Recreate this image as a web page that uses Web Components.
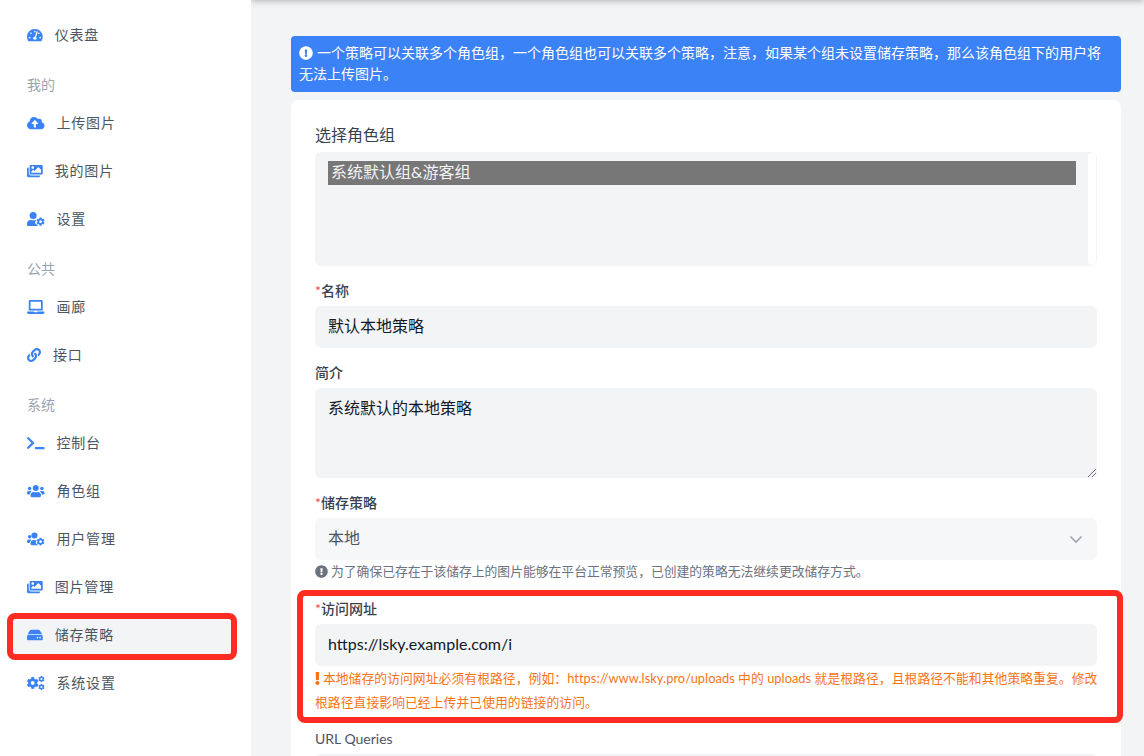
<!DOCTYPE html>
<html lang="zh-CN">
<head>
<meta charset="utf-8">
<title>储存策略</title>
<style>
html,body{margin:0;padding:0;height:756px;overflow:hidden;background:#f3f4f6}
body{font-family:Lato,"Noto Sans CJK SC",sans-serif;color:#374151}
</style>
</head>
<body>
<x-app>
  <x-sidebar slot="side">
    <x-nav icon="tach" w="576" label="仪表盘"></x-nav>
    <x-group>我的</x-group>
    <x-nav icon="cloud" w="640" label="上传图片"></x-nav>
    <x-nav icon="images" w="576" label="我的图片"></x-nav>
    <x-nav icon="usercog" w="640" label="设置"></x-nav>
    <x-group>公共</x-group>
    <x-nav icon="laptop" w="640" label="画廊"></x-nav>
    <x-nav icon="link" w="512" label="接口"></x-nav>
    <x-group>系统</x-group>
    <x-nav icon="terminal" w="640" label="控制台"></x-nav>
    <x-nav icon="users" w="640" label="角色组"></x-nav>
    <x-nav icon="userscog" w="640" label="用户管理"></x-nav>
    <x-nav icon="images" w="576" label="图片管理"></x-nav>
    <x-nav icon="hdd" w="576" label="储存策略" active></x-nav>
    <x-nav icon="cogs" w="640" label="系统设置"></x-nav>
  </x-sidebar>
  <x-alert>一个策略可以关联多个角色组，一个角色组也可以关联多个策略，注意，如果某个组未设置储存策略，那么该角色组下的用户将无法上传图片。</x-alert>
  <x-card>
    <x-field label="选择角色组" big>
      <x-multi>系统默认组&amp;游客组</x-multi>
    </x-field>
    <x-field label="名称" required>
      <x-input>默认本地策略</x-input>
    </x-field>
    <x-field label="简介">
      <x-input area>系统默认的本地策略</x-input>
    </x-field>
    <x-field label="储存策略" required>
      <x-input select>本地</x-input>
      <x-help slot="help" icon="circle">为了确保已存在于该储存上的图片能够在平台正常预览，已创建的策略无法继续更改储存方式。</x-help>
    </x-field>
    <x-field label="访问网址" required marked>
      <x-input>https://lsky.example.com/i</x-input>
      <x-help slot="help" icon="bang" warn>本地储存的访问网址必须有根路径，例如：https://www.lsky.pro/uploads 中的 uploads 就是根路径，且根路径不能和其他策略重复。修改根路径直接影响已经上传并已使用的链接的访问。</x-help>
    </x-field>
    <x-field label="URL Queries" plain>
      <x-input></x-input>
    </x-field>
  </x-card>
</x-app>
<script>
const GEAR='M610.5 373.3c2.6-14.1 2.6-28.5 0-42.6l25.8-14.9c3-1.7 4.3-5.2 3.3-8.5-6.7-21.6-18.2-41.2-33.2-57.4-2.3-2.5-6-3.1-9-1.4l-25.8 14.9c-10.9-9.3-23.4-16.5-36.9-21.3v-29.8c0-3.4-2.4-6.4-5.7-7.1-22.3-5-45-4.8-66.2 0-3.3.7-5.7 3.7-5.7 7.1v29.8c-13.5 4.8-26 12-36.9 21.3l-25.8-14.9c-2.9-1.7-6.7-1.1-9 1.4-15 16.2-26.5 35.8-33.2 57.4-1 3.3.4 6.8 3.3 8.5l25.8 14.9c-2.6 14.1-2.6 28.5 0 42.6l-25.8 14.9c-3 1.7-4.3 5.2-3.3 8.5 6.7 21.6 18.2 41.1 33.2 57.4 2.3 2.5 6 3.1 9 1.4l25.8-14.9c10.9 9.3 23.4 16.5 36.9 21.3v29.8c0 3.4 2.4 6.4 5.7 7.1 22.3 5 45 4.8 66.2 0 3.3-.7 5.7-3.7 5.7-7.1v-29.8c13.5-4.8 26-12 36.9-21.3l25.8 14.9c2.9 1.7 6.7 1.1 9-1.4 15-16.2 26.5-35.8 33.2-57.4 1-3.3-.4-6.8-3.3-8.5l-25.8-14.9zM496 400.5c-26.8 0-48.5-21.8-48.5-48.5s21.8-48.5 48.5-48.5 48.5 21.8 48.5 48.5-21.7 48.5-48.5 48.5z';
const gearAt=(cx,cy,s)=>`<path transform="translate(${cx} ${cy}) scale(${s}) translate(-496 -352)" d="${GEAR}"/>`;
const ICONS={
tach:'<path d="M288 32C128.94 32 0 160.94 0 320c0 52.8 14.25 102.26 39.06 144.8 5.61 9.62 16.3 15.2 27.44 15.2h443c11.14 0 21.83-5.58 27.44-15.2C561.75 422.26 576 372.8 576 320c0-159.06-128.94-288-288-288zm0 64c14.71 0 26.58 10.13 30.32 23.65-1.11 2.26-2.64 4.23-3.45 6.67l-9.22 27.67c-5.13 3.49-10.97 6.01-17.64 6.01-17.67 0-32-14.33-32-32S270.33 96 288 96zM96 384c-17.67 0-32-14.33-32-32s14.33-32 32-32 32 14.33 32 32-14.33 32-32 32zm48-160c-17.67 0-32-14.33-32-32s14.33-32 32-32 32 14.33 32 32-14.33 32-32 32zm246.77-72.41l-61.33 184C343.13 347.33 352 364.54 352 384c0 11.72-3.38 22.55-8.88 32H232.88c-5.5-9.45-8.88-20.28-8.88-32 0-33.94 26.5-61.43 59.9-63.59l61.34-184.01c4.17-12.56 17.73-19.45 30.36-15.17 12.57 4.19 19.35 17.79 15.17 30.36zm14.66 57.2l15.52-46.55c3.47-1.29 7.13-2.23 11.05-2.23 17.67 0 32 14.33 32 32s-14.33 32-32 32c-11.38-.01-20.89-6.27-26.57-15.22zM480 384c-17.67 0-32-14.33-32-32s14.33-32 32-32 32 14.33 32 32-14.33 32-32 32z"/>',
cloud:'<path d="M537.6 226.6c4.1-10.7 6.4-22.4 6.4-34.6 0-53-43-96-96-96-19.7 0-38.1 6-53.3 16.2C367 64.2 315.3 32 256 32c-88.4 0-160 71.6-160 160 0 2.7.1 5.4.2 8.1C40.2 219.8 0 273.2 0 336c0 79.5 64.5 144 144 144h368c70.7 0 128-57.3 128-128 0-61.9-44-113.6-102.4-125.4zM393.4 288H328v112c0 8.8-7.2 16-16 16h-48c-8.8 0-16-7.2-16-16V288h-65.4c-14.3 0-21.4-17.2-11.3-27.3l105.4-105.4c6.2-6.2 16.4-6.2 22.6 0l105.4 105.4c10.1 10.1 2.9 27.3-11.3 27.3z"/>',
images:'<path d="M480 416v16c0 26.51-21.49 48-48 48H48c-26.51 0-48-21.49-48-48V176c0-26.51 21.49-48 48-48h16v208c0 44.112 35.888 80 80 80h336zm96-80V80c0-26.51-21.49-48-48-48H144c-26.51 0-48 21.49-48 48v256c0 26.51 21.49 48 48 48h384c26.51 0 48-21.49 48-48zM256 128c0 26.51-21.49 48-48 48s-48-21.49-48-48 21.49-48 48-48 48 21.49 48 48zm-96 144l55.515-55.515c4.686-4.686 12.284-4.686 16.971 0L272 256l135.515-135.515c4.686-4.686 12.284-4.686 16.971 0L512 208v112H160v-48z"/>',
usercog:'<path d="'+GEAR+'"/><circle cx="224" cy="128" r="128"/><path d="M48 512C21.5 512 0 490.5 0 464v-41.6C0 348.2 60.2 288 134.4 288h16.7c22.2 10.2 46.9 16 72.9 16 26 0 50.7-5.8 72.9-16h28c-6 8-11 22-11 34l12 7-14 9c-15 10-22 30-16 48 8 24 20 45 37 63 13 14 33 17 49 8l-2 24c0 8 1 20 6 32z"/>',
laptop:'<path d="M624 416H381.54c-.74 19.81-14.71 32-32.74 32H288c-18.69 0-33.02-17.47-32.77-32H16c-8.8 0-16 7.2-16 16v16c0 35.2 28.8 64 64 64h512c35.2 0 64-28.8 64-64v-16c0-8.8-7.2-16-16-16zM576 48c0-26.4-21.6-48-48-48H112C85.6 0 64 21.6 64 48v336h512V48zm-64 272H128V64h384v256z"/>',
link:'<path d="M326.612 185.391c59.747 59.809 58.927 155.698.36 214.59-.11.12-.24.25-.36.37l-67.2 67.2c-59.27 59.27-155.699 59.262-214.96 0-59.27-59.26-59.27-155.7 0-214.96l37.106-37.106c9.84-9.84 26.786-3.3 27.294 10.606.648 17.722 3.826 35.527 9.69 52.721 1.986 5.822.567 12.262-3.783 16.612l-13.087 13.087c-28.026 28.026-28.905 73.66-1.155 101.96 28.024 28.579 74.086 28.749 102.325.51l67.2-67.19c28.191-28.191 28.073-73.757 0-101.83-3.701-3.694-7.429-6.564-10.341-8.569a16.037 16.037 0 0 1-6.947-12.606c-.396-10.567 3.348-21.456 11.698-29.806l21.054-21.055c5.521-5.521 14.182-6.199 20.584-1.731a152.482 152.482 0 0 1 20.522 17.197zM467.547 44.449c-59.261-59.262-155.69-59.27-214.96 0l-67.2 67.2c-.12.12-.25.25-.36.37-58.566 58.892-59.387 154.781.36 214.59a152.454 152.454 0 0 0 20.521 17.196c6.402 4.468 15.064 3.789 20.584-1.731l21.054-21.055c8.35-8.35 12.094-19.239 11.698-29.806a16.037 16.037 0 0 0-6.947-12.606c-2.912-2.005-6.64-4.875-10.341-8.569-28.073-28.073-28.191-73.639 0-101.83l67.2-67.19c28.239-28.239 74.3-28.069 102.325.51 27.75 28.3 26.872 73.934-1.155 101.96l-13.087 13.087c-4.35 4.35-5.769 10.79-3.783 16.612 5.864 17.194 9.042 34.999 9.69 52.721.509 13.906 17.454 20.446 27.294 10.606l37.106-37.106c59.271-59.259 59.271-155.699.001-214.959z"/>',
terminal:'<path d="M257.981 272.971L63.638 467.314c-9.373 9.373-24.569 9.373-33.941 0L7.029 444.647c-9.357-9.357-9.375-24.522-.04-33.901L161.011 256 6.99 101.255c-9.335-9.379-9.317-24.544.04-33.901l22.667-22.667c9.373-9.373 24.569-9.373 33.941 0L257.981 239.03c9.373 9.372 9.373 24.568 0 33.941zM640 456v-32c0-13.255-10.745-24-24-24H312c-13.255 0-24 10.745-24 24v32c0 13.255 10.745 24 24 24h304c13.255 0 24-10.745 24-24z"/>',
users:'<path d="M96 224c35.3 0 64-28.7 64-64s-28.7-64-64-64-64 28.7-64 64 28.7 64 64 64zm448 0c35.3 0 64-28.7 64-64s-28.7-64-64-64-64 28.7-64 64 28.7 64 64 64zm32 32h-64c-17.6 0-33.5 7.1-45.1 18.6 40.3 22.1 68.9 62 75.1 109.4h66c17.7 0 32-14.3 32-32v-32c0-35.3-28.7-64-64-64zm-256 0c61.9 0 112-50.1 112-112S381.9 32 320 32 208 82.1 208 144s50.1 112 112 112zm76.8 32h-8.3c-20.8 10-43.9 16-68.5 16s-47.6-6-68.5-16h-8.3C179.6 288 128 339.6 128 403.2V432c0 26.5 21.5 48 48 48h288c26.5 0 48-21.5 48-48v-28.8c0-63.6-51.6-115.2-115.2-115.2zm-223.7-13.4C161.5 263.1 145.6 256 128 256H64c-35.3 0-64 28.7-64 64v32c0 17.7 14.3 32 32 32h65.9c6.3-47.4 34.9-87.3 75.2-109.4z"/>',
userscog:'<circle cx="96" cy="176" r="64"/><circle cx="272" cy="128" r="112"/><path d="M0 336c0-35 29-64 64-64h64c18 0 34 7 45 19-40 22-68 62-75 109H32c-18 0-32-14-32-32z"/><path d="M176 480c-26 0-48-22-48-48v-29c0-64 52-115 115-115h8c21 10 44 16 69 16 12 0 20-1 30-3-5 12-7 26-3 40l-14 10c-12 9-16 25-10 40 7 19 17 37 31 52 10 11 27 13 40 6v31z"/>'+gearAt(496,352,.95),
hdd:'<path d="M576 304v96c0 26.51-21.49 48-48 48H48c-26.51 0-48-21.49-48-48v-96c0-26.51 21.49-48 48-48h480c26.51 0 48 21.49 48 48zm-48-80a79.557 79.557 0 0 1 30.777 6.165L462.25 85.374A48.003 48.003 0 0 0 422.311 64H153.689a48 48 0 0 0-39.938 21.374L17.223 230.165A79.557 79.557 0 0 1 48 224h480zm-48 96c-17.673 0-32 14.327-32 32s14.327 32 32 32 32-14.327 32-32-14.327-32-32-32zm-96 0c-17.673 0-32 14.327-32 32s14.327 32 32 32 32-14.327 32-32-14.327-32-32-32z"/>',
cogs:gearAt(208,256,1.45)+gearAt(528,112,.75)+gearAt(528,400,.75),
circle:'<path d="M504 256c0 136.997-111.043 248-248 248S8 392.997 8 256C8 119.083 119.043 8 256 8s248 111.083 248 248zm-248 50c-25.405 0-46 20.595-46 46s20.595 46 46 46 46-20.595 46-46-20.595-46-46-46zm-43.673-165.346l7.418 136c.347 6.364 5.609 11.346 11.982 11.346h48.546c6.373 0 11.635-4.982 11.982-11.346l7.418-136c.375-6.874-5.098-12.654-11.982-12.654h-63.383c-6.884 0-12.356 5.78-11.981 12.654z"/>',
bang:'<path d="M176 432c0 44.112-35.888 80-80 80s-80-35.888-80-80 35.888-80 80-80 80 35.888 80 80zM25.26 25.199l13.6 272C39.499 309.972 50.041 320 62.83 320h66.34c12.789 0 23.331-10.028 23.97-22.801l13.6-272C167.425 11.49 156.496 0 142.77 0H49.23C35.504 0 24.575 11.49 25.26 25.199z"/>'
};
const svg=(name,w,size,extra='')=>`<svg xmlns="http://www.w3.org/2000/svg" viewBox="0 0 ${w} 512" width="${size*w/512}" height="${size}" fill="currentColor" style="display:block;flex:none;${extra}">${ICONS[name]}</svg>`;
function def(tag,html){
  customElements.define(tag,class extends HTMLElement{
    connectedCallback(){
      if(this.shadowRoot)return;
      const r=this.attachShadow({mode:'open'});
      r.innerHTML=typeof html==='function'?html(this):html;
    }
  });
}
def('x-app',`<style>
:host{display:grid;grid-template-columns:251px 1fr;height:756px;overflow:hidden}
main{position:relative;min-width:0;padding:36px 23px 0 40px;overflow:hidden;height:720px;display:flex;flex-direction:column;gap:8px}
.bar{position:absolute;left:0;right:0;top:-10px;height:10px;background:#fff;box-shadow:0 1px 6px rgba(0,0,0,.28)}
</style><slot name="side"></slot><main><div class="bar"></div><slot></slot></main>`);
def('x-sidebar',`<style>
:host{display:flex;flex-direction:column;gap:8px;background:#fff;height:756px;box-sizing:border-box;padding:15px 19px 0 12px}
</style><slot></slot>`);
def('x-group',`<style>
:host{display:block;margin:12px 0 0 15px;font-size:14px;line-height:20px;color:#9ca3af}
</style><slot></slot>`);
def('x-nav',h=>`<style>
:host{display:flex;position:relative;align-items:center;height:40px;padding-left:15px;color:#4b5563;font-size:14px;letter-spacing:.8px;border-radius:6px;${h.hasAttribute('active')?'background:#f3f4f6;':''}}
.i{color:#3b82f6;margin-right:12px}
.t{padding-bottom:2px}
.mark{position:absolute;left:-5px;right:-5px;top:-2px;bottom:-5px;border:6px solid #fe2c23;border-radius:8px;pointer-events:none}
</style><span class="i">${svg(h.getAttribute('icon'),+h.getAttribute('w'),14)}</span><span class="t">${h.getAttribute('label')}</span>${h.hasAttribute('active')?'<div class="mark"></div>':''}`);
def('x-alert',`<style>
:host{display:block;flex:none;background:#3b82f6;color:#fff;border-radius:4px;font-size:14px;line-height:21px;height:56px;box-sizing:border-box;padding:6px 16px 7px 8px}
.i{display:inline-block;vertical-align:-2px;margin-right:4px}
</style><span class="i">${svg('circle',512,14)}</span><slot></slot>`);
def('x-card',`<style>
:host{display:flex;flex-direction:column;gap:16px;flex:none;background:#fff;border-radius:8px;padding:24px 24px 24px}
</style><slot></slot>`);
def('x-field',h=>{
  const big=h.hasAttribute('big'),plain=h.hasAttribute('plain');
  return `<style>
:host{display:block;position:relative}
label{display:block;font-size:${big?16:14}px;line-height:${big?22:18}px;margin-bottom:6px;color:${plain?'#4b5563':'#374151'};${big||plain?'font-weight:400;':'font-weight:500;'}}
b{color:#ef4444;font-weight:400}
.mark{position:absolute;left:-18px;right:-26px;top:-10px;bottom:-9px;border:6px solid #fe2c23;border-radius:8px;pointer-events:none}
</style><label>${h.hasAttribute('required')?'<b>*</b>':''}${h.getAttribute('label')}</label><slot></slot><slot name="help"></slot>${h.hasAttribute('marked')?'<div class="mark"></div>':''}`;
});
def('x-multi',`<style>
:host{display:flex;height:114px;box-sizing:border-box;background:#f3f4f6;border-radius:6px;padding:9px 1px 1px 13px;gap:12px}
.o{flex:1;height:24px;background:#777;color:#f3f4f6;font-size:16px;line-height:22px;padding-left:3px}
.s{width:8px;background:#fff;border-radius:4px;margin-top:-8px;border:0}
</style><div class="o"><slot></slot></div><div class="s"></div>`);
def('x-input',h=>{
  const a=h.hasAttribute('area'),s=h.hasAttribute('select');
  return `<style>
:host{display:block;position:relative;box-sizing:border-box;height:${a?90:42}px;background:${s?'#f6f7f9':'#f3f4f6'};border-radius:6px;padding:8px 13px;font-size:16px;line-height:24px;color:${s?'#4b5563':'#111827'}}
svg{position:absolute}
</style><slot></slot>${s?'<svg style="right:14px;top:14px" width="14" height="14" viewBox="0 0 14 14" fill="none" stroke="#9ca3af" stroke-width="1.6"><path d="M1.5 4.5 7 10l5.5-5.5"/></svg>':''}${a?'<svg style="right:1px;bottom:1px" width="8" height="8" viewBox="0 0 8 8" fill="none" stroke="#6b7280" stroke-width="1"><path d="M0 8 8 0M4 8 8 4"/></svg>':''}`;
});
def('x-help',h=>{
  const w=h.hasAttribute('warn');
  return `<style>
:host{display:block;font-size:12.8px;line-height:${w?24:22}px;${w?'letter-spacing:.06px;margin-right:-4px;':'padding-bottom:2px;'}color:${w?'#f97316':'#6b7280'}}
.i{display:inline-block;vertical-align:-2px;margin-right:3px}
</style><span class="i">${w?svg('bang',192,13):svg('circle',512,13)}</span><slot></slot>`;
});
</script>
</body>
</html>
